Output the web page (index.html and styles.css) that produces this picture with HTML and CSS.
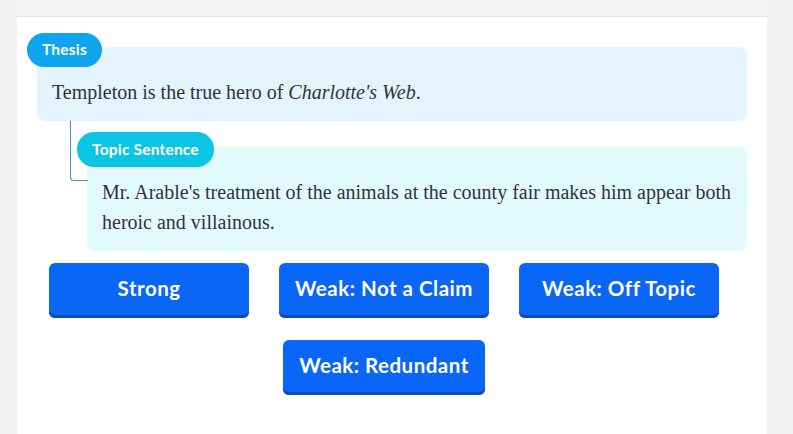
FILE: index.html
```html
<!DOCTYPE html>
<html lang="en">
<head>
  <meta charset="UTF-8" />
  <title>Thesis Review</title>
  <link rel="stylesheet" href="styles.css">
</head>
<body>
  <div class="panel">
    <div class="panel-top"></div>
    <div class="panel-body">

      <!-- Thesis -->
      <div class="block thesis">
        <span class="pill">Thesis</span>
        <p>Templeton is the true hero of <em>Charlotte's Web</em>.</p>
      </div>

      <!-- Topic sentence -->
      <div class="block topic">
        <span class="connector"></span>
        <span class="pill">Topic Sentence</span>
        <p>Mr. Arable's treatment of the animals at the county fair makes him appear both heroic and villainous.</p>
      </div>

      <!-- Answer choices -->
      <div class="choices">
        <button type="button">Strong</button>
        <button type="button">Weak: Not a Claim</button>
        <button type="button">Weak: Off Topic</button>
        <button type="button">Weak: Redundant</button>
      </div>

    </div>
  </div>
</body>
</html>
```

FILE: styles.css
```css
body {
  margin: 0;
  background: #f0f0f0;
  font-family: Lato, "Open Sans", sans-serif;
}
.panel {
  width: 750px;
  margin-left: 17px;
  background: white;
  min-height: 434px;
}
.panel-top {
  height: 16px;
  background: #f4f4f4;
  border-bottom: 1px solid #e6e6e6;
}
.panel-body {
  padding: 30px 20px 0 20px;
}
.block {
  position: relative;
  border-radius: 8px;
}
.block p {
  margin: 0;
  padding: 30px 10px 14px 15px;
  font-family: Georgia, "Liberation Serif", serif;
  font-size: 20px;
  line-height: 30px;
  color: #333;
}
.thesis {
  background: #e3f4fd;
}
.topic {
  margin-top: 26px;
  margin-left: 50px;
  background: #e1fbfd;
}
.pill {
  position: absolute;
  top: -14px;
  left: -10px;
  height: 34px;
  line-height: 33px;
  padding: 0 15px;
  border-radius: 17px;
  color: white;
  font-size: 15.5px;
  font-weight: bold;
  letter-spacing: 0.2px;
}
.thesis .pill {
  background: #0ea5ef;
}
.topic .pill {
  top: -15px;
  height: 35px;
  line-height: 34px;
  background: #0cc5e3;
}
.connector {
  position: absolute;
  left: -17px;
  top: -26px;
  width: 17px;
  height: 59px;
  border-left: 1px solid #3a9bb0;
  border-bottom: 1px solid #3a9bb0;
  border-bottom-left-radius: 4px;
}
.choices {
  display: flex;
  flex-wrap: wrap;
  justify-content: center;
  gap: 22px 30px;
  margin: 12px 16px 0 0;
}
.choices button {
  min-width: 200px;
  height: 55px;
  padding: 0 16px 5px 16px;
  border: none;
  border-radius: 6px;
  background: #0a66f6;
  box-shadow: inset 0 -3px 0 #0a4dbd;
  color: white;
  font-family: inherit;
  font-size: 20.5px;
  font-weight: bold;
  letter-spacing: 0.5px;
  cursor: pointer;
}
```
